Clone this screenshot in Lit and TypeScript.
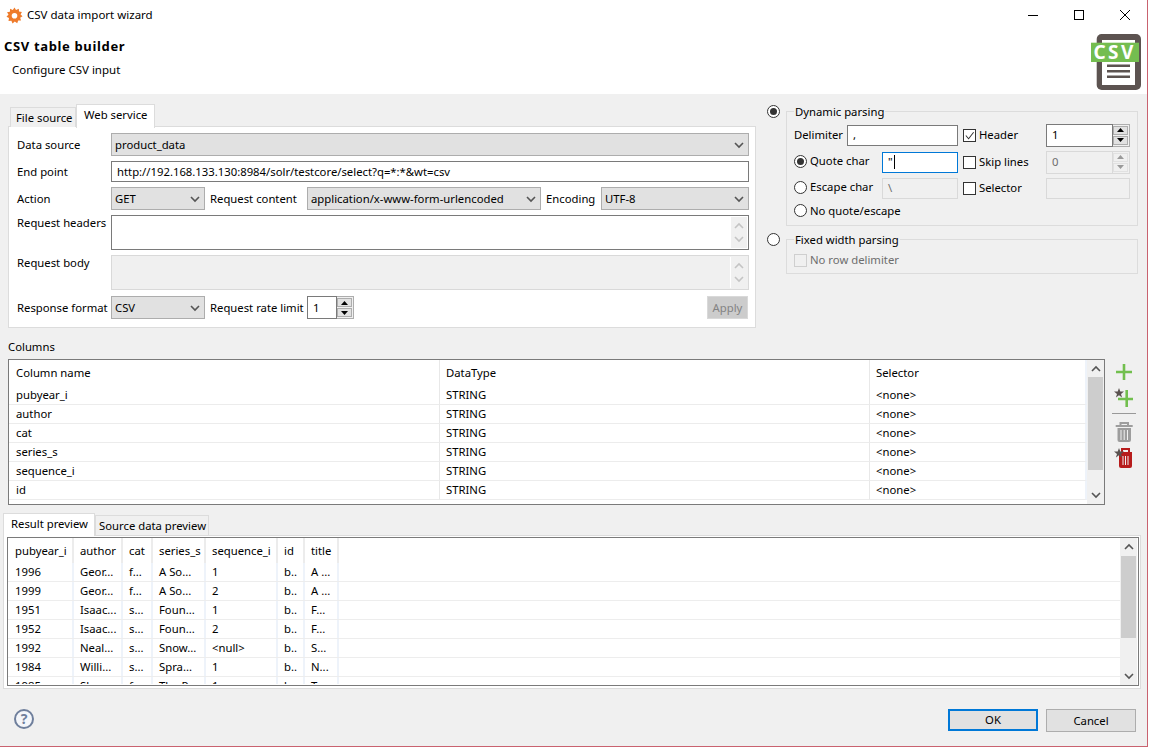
import { LitElement, html, css, svg } from 'lit';
import { customElement } from 'lit/decorators.js';

const chevronUp = svg`<path d="M1 6 L5 2 L9 6" fill="none" stroke="currentColor" stroke-width="1.6"/>`;
const chevronDown = svg`<path d="M1 2 L5 6 L9 2" fill="none" stroke="currentColor" stroke-width="1.6"/>`;

const COLUMNS = ['pubyear_i', 'author', 'cat', 'series_s', 'sequence_i', 'id'];

const PREVIEW_HEAD = ['pubyear_i', 'author', 'cat', 'series_s', 'sequence_i', 'id', 'title'];
const PREVIEW_ROWS = [
  ['1996', 'Geor...', 'f...', 'A So...', '1', 'b..', 'A ...'],
  ['1999', 'Geor...', 'f...', 'A So...', '2', 'b..', 'A ...'],
  ['1951', 'Isaac...', 's...', 'Foun...', '1', 'b..', 'F...'],
  ['1952', 'Isaac...', 's...', 'Foun...', '2', 'b..', 'F...'],
  ['1992', 'Neal...', 's...', 'Snow...', '<null>', 'b..', 'S...'],
  ['1984', 'Willi...', 's...', 'Spra...', '1', 'b..', 'N...'],
  ['1985', 'Sh...', 'f...', 'The P...', '1', 'b..', 'T...'],
];

@customElement('app-root')
export class AppRoot extends LitElement {
  static styles = css`
    :host {
      display: block;
      width: 1149px;
      height: 747px;
      background: #fff;
      font-family: 'Noto Sans', 'Liberation Sans', sans-serif;
      font-size: 11.3px;
      line-height: 14px;
      color: #000;
    }
    * { box-sizing: border-box; }

    .window {
      width: 1148px;
      height: 747px;
      border-right: 1px solid #c9626f;
      border-bottom: 1px solid #c9626f;
      display: flex;
      flex-direction: column;
      overflow: hidden;
    }

    /* title bar */
    .titlebar {
      height: 30px;
      flex: none;
      display: flex;
      align-items: center;
      padding-left: 6px;
      margin-right: -1px;
    }
    .titlebar .gear { width: 17px; height: 17px; margin-right: 4px; }
    .titlebar .name { flex: 1; font-size: 11.5px; }
    .winbtn { width: 46px; height: 29px; align-self: flex-start; display: flex; align-items: center; justify-content: center; }
    .winbtn svg { width: 10px; height: 10px; }

    /* banner */
    .banner {
      height: 64px;
      flex: none;
      display: flex;
      justify-content: space-between;
    }
    .banner h1 {
      margin: 8px 0 0 4px;
      font-size: 13px;
      line-height: 16px;
      font-weight: 700;
      letter-spacing: 0.65px;
    }
    .banner p { margin: 9px 0 0 12px; font-size: 11.5px; }
    .logo { width: 52px; height: 58px; margin: 3px 5px 0 0; }
    .logo text { font-family: 'Noto Sans', sans-serif; font-weight: 700; font-size: 19px; letter-spacing: 2.4px; fill: #fff; }

    .body {
      flex: 1;
      background: #f0f0f0;
      display: flex;
      flex-direction: column;
      min-height: 0;
    }

    .top { display: flex; padding: 10px 0 0 8px; height: 234px; flex: none; }
    .left { width: 748px; flex: none; }
    .right { width: 371px; margin-left: 11px; flex: none; }

    /* tabs */
    .tabs { display: flex; align-items: flex-end; height: 23px; padding-left: 2px; position: relative; z-index: 1; }
    .tab {
      height: 20px;
      padding: 3px 0 0 5px;
      background: #f0f0f0;
      border: 1px solid #dcdcdc;
      border-bottom: none;
      white-space: nowrap;
    }
    .tab.active { background: #fff; padding-top: 3px; margin-bottom: -1px; height: 24px; }
    .t-file { width: 66px; }
    .t-web { width: 79px; padding-left: 7px; }

    .panel {
      height: 202px;
      border: 1px solid #dcdcdc;
      background: #fff;
      padding: 6px 6px 0 8px;
      display: flex;
      flex-direction: column;
      margin-top: -1px;
    }
    .row { display: flex; align-items: center; margin-bottom: 5px; }
    .row .lab { width: 94px; flex: none; white-space: nowrap; }
    .row.h23 { height: 23px; }
    .row.h21 { height: 21px; }
    .row.tall { height: 35px; align-items: flex-start; }
    .row.tall .lab { padding-top: 1px; }
    .row.last { margin-top: 1px; margin-bottom: 0; }
    .mid { white-space: nowrap; margin-left: 5px; flex: none; }
    .mid97 { width: 97px; }
    .mid55 { width: 55px; }

    .select {
      height: 23px;
      background: #e1e1e1;
      border: 1px solid #adadad;
      display: flex;
      align-items: center;
      justify-content: space-between;
      padding: 0 4px 0 3px;
      flex: none;
    }
    .select svg { width: 10px; height: 8px; color: #555; }
    .w94 { width: 94px; }
    .w234 { width: 234px; }
    .w148 { width: 148px; }

    .input {
      background: #fff;
      border: 1px solid #7a7a7a;
      display: flex;
      align-items: center;
      padding-left: 5px;
      flex: none;
    }
    .h21 > .input { height: 21px; }
    .select.grow, .input.grow { flex: 1; }
    .input.focus { border-color: #0078d7; }
    .input.off { background: #f0f0f0; border-color: #d9d9d9; color: #6d6d6d; }
    .caret { width: 1px; height: 14px; background: #000; margin-left: 1px; }

    .textarea {
      flex: 1;
      height: 35px;
      border: 1px solid #7a7a7a;
      background: #fff;
      display: flex;
      justify-content: flex-end;
      padding: 1px;
    }
    .textarea.off { background: #f0f0f0; border-color: #d9d9d9; }
    .ta-scroll {
      width: 16px;
      background: #f0f0f0;
      color: #c4c4c4;
      display: flex;
      flex-direction: column;
      align-items: center;
      justify-content: space-between;
      padding: 5px 0;
    }
    .textarea.off .ta-scroll { border-left: 1px solid #fff; width: 17px; }
    .ta-scroll svg { width: 10px; height: 8px; }

    .spacer { flex: 1; }
    .apply {
      width: 41px;
      height: 23px;
      margin-right: 1px;
      background: #cccccc;
      border: 1px solid #d9d9d9;
      color: #838383;
      display: flex;
      align-items: center;
      justify-content: center;
    }

    .spinner { display: flex; height: 23px; flex: none; }
    .spinner .field { flex: 1; background: #fff; border: 1px solid #7a7a7a; padding-left: 5px; display: flex; align-items: center; }
    .spinner .btns { width: 17px; border: 1px solid #adadad; border-left: none; display: flex; flex-direction: column; padding: 1px 1px 1px 0; gap: 1px; background: #f0f0f0; }
    .spinner .btn { flex: 1; background: #e1e1e1; border: 1px solid #adadad; display: flex; align-items: center; justify-content: center; color: #000; }
    .spinner .btn svg { width: 7px; height: 4px; }
    .spinner.off .field { background: #f0f0f0; border-color: #d9d9d9; color: #6d6d6d; }
    .spinner.off .btns { border-color: #d9d9d9; }
    .spinner.off .btn { background: #f0f0f0; border-color: #e1e1e1; color: #9a9a9a; }
    .sp47 { width: 47px; }
    .sp84 { width: 84px; }

    /* parsing options */
    .option { display: flex; align-items: flex-start; }
    .option > .radio { margin-top: 1px; margin-right: 6px; }
    .option.gap14 > .radio { margin-top: -6px; }
    .radio {
      width: 13px;
      height: 13px;
      border: 1px solid #333;
      border-radius: 50%;
      background: #fff;
      flex: none;
      display: flex;
      align-items: center;
      justify-content: center;
    }
    .radio.on::after { content: ''; width: 7px; height: 7px; border-radius: 50%; background: #333; }
    .group {
      width: 352px;
      border: 1px solid #dcdcdc;
      padding: 0 7px;
    }
    .g1 { height: 115px; margin-top: 7px; }
    .g2 { height: 35px; }
    .gap14 { margin-top: 13px; }
    .legend { display: block; width: fit-content; margin: -7px 0 0 0; padding: 0 1px; background: #f0f0f0; height: 14px; }
    .optrow { display: flex; align-items: center; height: 22px; }
    .r1 { margin-top: 5px; }
    .r2 { margin-top: 5px; }
    .r3 { margin-top: 4px; }
    .r4 { margin-top: 4px; height: 15px; }
    .optrow .h22 { height: 21px; }
    .name53 { width: 53px; flex: none; }
    .w111 { width: 111px; margin-right: 5px; }
    .w76 { width: 76px; margin-right: 5px; }
    .radlab { width: 88px; flex: none; display: flex; align-items: center; gap: 3px; white-space: nowrap; }
    .r2 .radlab, .r3 .radlab { margin-bottom: 2px; }
    .checkcol { width: 83px; flex: none; display: flex; align-items: center; gap: 3px; white-space: nowrap; }
    .check {
      width: 13px;
      height: 13px;
      border: 1px solid #333;
      background: #fff;
      flex: none;
      display: flex;
      align-items: center;
      justify-content: center;
    }
    .check svg { width: 11px; height: 11px; }
    .check.off { border-color: #cfcfcf; background: #f0f0f0; }
    .nodelim { display: flex; align-items: center; gap: 3px; margin-top: 6px; color: #6d6d6d; }
    .plain84 { width: 84px; height: 21px; }

    /* columns table */
    .collabel { margin: 12px 0 0 8px; height: 14px; }
    .colwrap { display: flex; margin: 5px 0 0 8px; height: 146px; flex: none; }
    .table {
      width: 1097px;
      flex: none;
      background: #fff;
      border: 1px solid #7a7a7a;
      display: flex;
      overflow: hidden;
    }
    .grid { flex: 1; min-width: 0; }
    .colgrid { display: grid; grid-template-columns: 431px 430px 1fr; align-content: start; }
    .colgrid .cell { height: 19px; padding: 2px 0 0 7px; border-right: 1px solid #e8e8e8; border-bottom: 1px solid #ececec; }
    .colgrid .head { height: 26px; padding: 6px 0 0 7px; border-bottom: none; }
    .colgrid .cell:nth-child(3n+2) { padding-left: 6px; }
    .colgrid .cell:nth-child(3n) { border-right: 2px solid #eef3fa; padding-left: 6px; }
    .scroll {
      width: 17px;
      flex: none;
      background: #f0f0f0;
      display: flex;
      flex-direction: column;
      align-items: center;
      color: #555;
    }
    .scroll svg { width: 10px; height: 8px; flex: none; }
    .scroll .up { margin-top: 5px; }
    .scroll .thumb { width: 15px; background: #cdcdcd; flex: none; }
    .scroll .fill { flex: 1; }
    .scroll .down { margin-bottom: 5px; }
    .s1 .thumb { height: 93px; margin-top: 4px; }
    .s2 .thumb { height: 82px; margin-top: 5px; }

    .tools { width: 26px; margin-left: 6px; padding-top: 1px; display: flex; flex-direction: column; align-items: center; }
    .tools svg { width: 24px; height: 24px; display: block; flex: none; }
    .tools .sep { width: 24px; height: 1px; background: #999; margin: 5px 0 6px; flex: none; }

    /* preview */
    .prevtabs { display: flex; align-items: flex-end; height: 22px; margin: 8px 0 0 3px; position: relative; z-index: 1; flex: none; }
    .prevtabs .tab.active { width: 92px; height: 23px; padding: 3px 0 0 7px; }
    .prevtabs .tab { width: 114px; height: 20px; padding: 3px 0 0 3px; }
    .prevpanel {
      width: 1138px;
      height: 154px;
      margin-left: 3px;
      border: 1px solid #dcdcdc;
      background: #fff;
      padding: 1px 1px 2px 3px;
      flex: none;
    }
    .prevtable { height: 100%; border: 1px solid #7a7a7a; display: flex; overflow: hidden; padding-right: 1px; }
    .prevscroll { flex: 1; min-width: 0; height: 146px; overflow: hidden; }
    .prevrow { display: grid; grid-template-columns: 66px 49px 30px 53px 72px 27px 34px 1fr; height: 19px; border-bottom: 1px solid #ededed; }
    .prevrow.head { height: 25px; border-bottom: none; }
    .prevrow div { padding: 2px 0 0 6px; border-right: 2px solid #eef3fa; white-space: nowrap; overflow: hidden; }
    .prevrow.head div { padding-top: 6px; border-right-color: #ececec; }
    .prevrow div:first-child { padding-left: 7px; }
    .prevrow div:last-child { border-right: none; }

    /* footer */
    .footer { flex: 1; display: flex; align-items: flex-start; padding: 20px 11px 0 14px; }
    .help { width: 20px; height: 20px; margin-right: auto; border: 2px solid #6f7f9c; border-radius: 50%; color: #6f7f9c; font-weight: 700; font-size: 14px; line-height: 16px; text-align: center; background: #f4f6fa; }
    .button {
      width: 90px;
      height: 23px;
      background: #e1e1e1;
      border: 1px solid #adadad;
      display: flex;
      align-items: center;
      justify-content: center;
      margin-left: 8px;
    }
    .button.def { border: 2px solid #0078d7; height: 22px; }
  `;

  private select(text: string, cls: string) {
    return html`<div class="select ${cls}"><span>${text}</span><svg viewBox="0 0 10 8">${chevronDown}</svg></div>`;
  }

  private spinner(value: string, cls: string) {
    return html`<div class="spinner ${cls}">
      <div class="field">${value}</div>
      <div class="btns">
        <div class="btn"><svg viewBox="0 0 7 4"><path d="M3.5 0 L7 4 L0 4 Z" fill="currentColor"/></svg></div>
        <div class="btn"><svg viewBox="0 0 7 4"><path d="M0 0 L7 0 L3.5 4 Z" fill="currentColor"/></svg></div>
      </div>
    </div>`;
  }

  private textScroll() {
    return html`<div class="ta-scroll">
      <svg viewBox="0 0 10 8">${chevronUp}</svg>
      <svg viewBox="0 0 10 8">${chevronDown}</svg>
    </div>`;
  }

  private scrollbar(cls: string) {
    return html`<div class="scroll ${cls}">
      <svg class="up" viewBox="0 0 10 8">${chevronUp}</svg>
      <div class="thumb"></div>
      <div class="fill"></div>
      <svg class="down" viewBox="0 0 10 8">${chevronDown}</svg>
    </div>`;
  }

  private renderParsing() {
    return html`
      <div class="option">
        <div class="radio on"></div>
        <div class="group g1">
          <span class="legend">Dynamic parsing</span>
          <div class="optrow r1">
            <span class="name53">Delimiter</span>
            <div class="input w111 h22">,</div>
            <div class="checkcol">
              <div class="check"><svg viewBox="0 0 12 12"><path d="M2 6 L5 9.5 L10.5 2.5" fill="none" stroke="#333" stroke-width="1.1"/></svg></div>
              <span>Header</span>
            </div>
            ${this.spinner('1', 'sp84')}
          </div>
          <div class="optrow r2">
            <div class="radlab"><div class="radio on"></div><span>Quote char</span></div>
            <div class="input focus w76 h22">"<span class="caret"></span></div>
            <div class="checkcol"><div class="check"></div><span>Skip lines</span></div>
            ${this.spinner('0', 'sp84 off')}
          </div>
          <div class="optrow r3">
            <div class="radlab"><div class="radio"></div><span>Escape char</span></div>
            <div class="input off w76 h22">\\</div>
            <div class="checkcol"><div class="check"></div><span>Selector</span></div>
            <div class="input off plain84"></div>
          </div>
          <div class="optrow r4">
            <div class="radlab"><div class="radio"></div><span>No quote/escape</span></div>
          </div>
        </div>
      </div>
      <div class="option gap14">
        <div class="radio"></div>
        <div class="group g2">
          <span class="legend">Fixed width parsing</span>
          <div class="nodelim"><div class="check off"></div><span>No row delimiter</span></div>
        </div>
      </div>
    `;
  }

  private renderTools() {
    return html`<div class="tools">
      <svg viewBox="0 0 24 24"><path d="M12 4 V20 M4 12 H20" stroke="#72bf4e" stroke-width="2.6" fill="none"/></svg>
      <svg viewBox="0 0 24 24">
        <path d="M14.700 6 V23 M6 15 H21" stroke="#72bf4e" stroke-width="2.6" fill="none"/>
        <path d="M7 4 L8.300 7.600 L12 7.600 L9 9.900 L10.100 13.400 L7 11.300 L3.900 13.400 L5 9.900 L2 7.600 L5.700 7.600 Z" fill="#5a5250"/>
      </svg>
      <div class="sep"></div>
      <svg viewBox="0 0 24 24">
        <path d="M3.700 6 H20.700 M8.500 6 V3 H16 V6" stroke="#9d9d9d" stroke-width="2" fill="none"/>
        <path d="M5.500 8 H19 V20 Q19 22 17 22 H7.500 Q5.500 22 5.500 20 Z" fill="#9d9d9d"/>
        <path d="M9 10 V20 M12.200 10 V20 M15.500 10 V20" stroke="#f0f0f0" stroke-width="1"/>
      </svg>
      <svg viewBox="0 0 24 24">
        <path d="M6 9 H20 M10 9 V5 H17 V9" stroke="#b71c1c" stroke-width="2" fill="none"/>
        <path d="M7 10 H20 V22 Q20 24 18 24 H9 Q7 24 7 22 Z" fill="#b71c1c"/>
        <path d="M11 12 V21 M13.500 12 V21 M16 12 V21" stroke="#f0f0f0" stroke-width="1"/>
        <path d="M7 4 L8.300 7.600 L12 7.600 L9 9.900 L10.100 13.400 L7 11.300 L3.900 13.400 L5 9.900 L2 7.600 L5.700 7.600 Z" fill="#5a5250"/>
      </svg>
    </div>`;
  }

  render() {
    return html`<div class="window">
      <div class="titlebar">
        <svg class="gear" viewBox="0 0 17 17">
          <path d="M8.500 0.500 L10 3 L12.800 1.800 L13 4.600 L15.900 5 L14.600 7.500 L16.500 9.300 L14.200 10.800 L15 13.500 L12.200 13.500 L11.200 16.200 L8.800 14.600 L6.500 16.400 L5.400 13.700 L2.500 14 L3 11.100 L0.500 9.700 L2.500 7.600 L1 5.200 L3.900 4.700 L4.100 1.800 L6.800 2.900 Z" fill="#ee7b2b"/>
          <circle cx="8.500" cy="8.700" r="2.800" fill="#fff"/>
        </svg>
        <span class="name">CSV data import wizard</span>
        <div class="winbtn"><svg viewBox="0 0 10 10"><path d="M0 5.500 H10" stroke="#000" stroke-width="1"/></svg></div>
        <div class="winbtn"><svg viewBox="0 0 10 10"><rect x="0.500" y="0.500" width="9" height="9" fill="none" stroke="#000"/></svg></div>
        <div class="winbtn"><svg viewBox="0 0 10 10"><path d="M0 0 L10 10 M10 0 L0 10" stroke="#000" stroke-width="1"/></svg></div>
      </div>

      <div class="banner">
        <div>
          <h1>CSV table builder</h1>
          <p>Configure CSV input</p>
        </div>
        <svg class="logo" viewBox="0 0 52 58">
          <rect x="6.700" y="1" width="44.300" height="56" rx="5" fill="#5c5350"/>
          <rect x="12" y="7" width="33" height="45" fill="#fff"/>
          <rect x="1" y="9.700" width="48" height="19.300" fill="#74bd50"/>
          <text x="3.500" y="26">CSV</text>
          <path d="M17 31.500 H40 V34 H17 Z M17 37 H40 V39.500 H17 Z M17 42.500 H40 V45 H17 Z" fill="#5c5350"/>
        </svg>
      </div>

      <div class="body">
        <div class="top">
          <div class="left">
            <div class="tabs">
              <div class="tab t-file">File source</div>
              <div class="tab active t-web">Web service</div>
            </div>
            <div class="panel">
              <div class="row h23"><span class="lab">Data source</span>${this.select('product_data', 'grow')}</div>
              <div class="row h21"><span class="lab">End point</span><div class="input grow">http://192.168.133.130:8984/solr/testcore/select?q=*:*&amp;wt=csv</div></div>
              <div class="row h23">
                <span class="lab">Action</span>${this.select('GET', 'w94')}
                <span class="mid mid97">Request content</span>
                ${this.select('application/x-www-form-urlencoded', 'w234')}
                <span class="mid mid55">Encoding</span>
                ${this.select('UTF-8', 'w148')}
              </div>
              <div class="row tall"><span class="lab">Request headers</span><div class="textarea">${this.textScroll()}</div></div>
              <div class="row tall"><span class="lab">Request body</span><div class="textarea off">${this.textScroll()}</div></div>
              <div class="row h23 last">
                <span class="lab">Response format</span>${this.select('CSV', 'w94')}
                <span class="mid mid97">Request rate limit</span>
                ${this.spinner('1', 'sp47')}
                <div class="spacer"></div>
                <div class="apply">Apply</div>
              </div>
            </div>
          </div>
          <div class="right">${this.renderParsing()}</div>
        </div>

        <div class="collabel">Columns</div>
        <div class="colwrap">
          <div class="table">
            <div class="grid colgrid">
              <div class="cell head">Column name</div>
              <div class="cell head">DataType</div>
              <div class="cell head">Selector</div>
              ${COLUMNS.map(
                (c) => html`<div class="cell">${c}</div><div class="cell">STRING</div><div class="cell">&lt;none&gt;</div>`
              )}
            </div>
            ${this.scrollbar('s1')}
          </div>
          ${this.renderTools()}
        </div>

        <div class="prevtabs">
          <div class="tab active">Result preview</div>
          <div class="tab">Source data preview</div>
        </div>
        <div class="prevpanel">
          <div class="prevtable">
            <div class="prevscroll">
              <div class="prevrow head">${PREVIEW_HEAD.map((h) => html`<div>${h}</div>`)}<div></div></div>
              ${PREVIEW_ROWS.map((r) => html`<div class="prevrow">${r.map((v) => html`<div>${v}</div>`)}<div></div></div>`)}
            </div>
            ${this.scrollbar('s2')}
          </div>
        </div>

        <div class="footer">
          <div class="help">?</div>
          <div class="button def">OK</div>
          <div class="button">Cancel</div>
        </div>
      </div>
    </div>`;
  }
}
